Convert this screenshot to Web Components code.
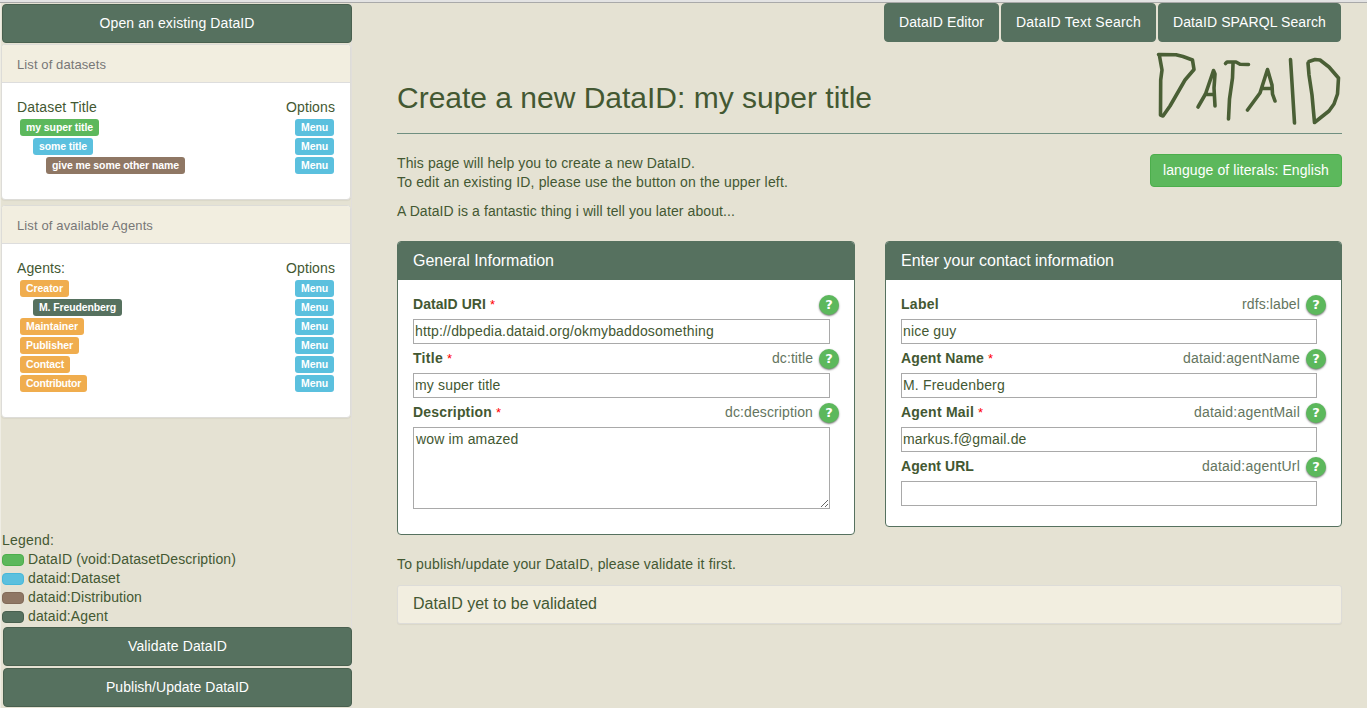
<!DOCTYPE html>
<html lang="en">
<head>
<meta charset="utf-8">
<title>DataID Editor</title>
<style>
html,body{margin:0;height:100%;overflow:hidden}
body{background:#e5e2d3;font:14px/19px "Liberation Sans",Arial,sans-serif;color:#435832}
</style>
</head>
<body>
<dataid-app></dataid-app>
<script>
const define = (name, css, html, setup) => {
  const template = document.createElement('template');
  template.innerHTML = `<style>*{box-sizing:border-box}:host{box-sizing:border-box;display:block}${css}</style>${html}`;
  customElements.define(name, class extends HTMLElement {
    constructor() {
      super();
      this.attachShadow({ mode: 'open' }).append(template.content.cloneNode(true));
    }
    connectedCallback() { if (setup) setup(this, this.shadowRoot); }
  });
};
// Fits a line of text to a given width by spreading the difference over its letters.
const fit = (el, width) => {
  if (!width) return;
  const range = document.createRange();
  range.selectNodeContents(el);
  const natural = range.getBoundingClientRect().width;
  el.style.letterSpacing = ((width - natural) / el.textContent.length) + 'px';
};

define('fit-text', ':host{display:inline-block;white-space:nowrap}', '<slot></slot>',
  el => fit(el, +el.getAttribute('w')));

define('d-button', `
  button{display:block;width:100%;height:39px;margin:0;padding:0 14px;border:1px solid #49604f;border-radius:4px;background:#56715f;color:#fff;font:inherit;text-align:center;white-space:nowrap}
  :host([kind=nav]) button{border-color:#56715f}
  :host([kind=success]) button{height:33px;padding:0 12px;background:#5cb85c;border-color:#4cae4c}`,
  '<button><slot></slot></button>');

define('d-label', `
  :host{height:17px;padding:0 6px;border-radius:3px;background:#5bc0de;color:#fff;font:bold 10.5px/17px "Liberation Sans",Arial,sans-serif;text-align:center;white-space:nowrap}
  :host([kind=root]){background:#5cb85c}
  :host([kind=distribution]){background:#8f7764}
  :host([kind=role]){background:#f0ad4e}
  :host([kind=agent]){background:#56715f}`,
  '<slot></slot>', el => { el.style.width = el.getAttribute('w') + 'px'; });

define('tree-row', `
  :host{height:19px;display:flex;justify-content:space-between;padding:1px 1px 1px 3px}
  d-label{flex:none}
  #name{display:flex}`,
  '<div id="name"><slot></slot></div><d-label w="39"><fit-text w="27">Menu</fit-text></d-label>',
  (el, root) => { root.getElementById('name').style.paddingLeft = 13 * (+el.getAttribute('level') || 0) + 'px'; });

define('side-panel', `
  :host{width:350px;margin-left:-1px;border:1px solid #dddcd8;border-radius:4px;background:#fff;box-shadow:0 1px 1px rgba(0,0,0,.05);overflow:hidden}
  header{height:38px;padding:11px 15px 0;background:#f2eee0;border-bottom:1px solid #ddd;font-size:13px;line-height:18px;color:#777}
  section{padding:15px 15px 0}
  .cols{display:flex;justify-content:space-between;height:20px}`,
  `<header><slot name="title"></slot></header>
   <section><div class="cols"><slot name="column"></slot><fit-text w="49">Options</fit-text></div><slot></slot></section>`);

define('legend-row', `
  :host{display:flex;align-items:center;height:19px;gap:4px}
  i{width:22px;height:12px;border-radius:4px;border:1px solid #4cae4c;background:#5cb85c}
  :host([kind=dataset]) i{background:#5bc0de;border-color:#46b8da}
  :host([kind=distribution]) i{background:#8f7764;border-color:#826b59}
  :host([kind=agent]) i{background:#56715f;border-color:#49604f}`,
  '<i></i><slot></slot>');

define('help-icon', `
  :host{width:20px;height:20px;border-radius:50%;background:#5cb85c;color:#fff;box-shadow:0 1px 2px rgba(0,0,0,.55);font:bold 13px/19px "DejaVu Sans","Liberation Sans",sans-serif;text-align:center}`,
  '?');

define('form-field', `
  :host{height:54px;padding-top:15px}
  :host([multiline]){height:111px}
  .head{display:flex;height:24px;margin-right:-9px}
  .name{font-weight:bold;display:flex;gap:4px}
  .req{color:#f00;font-weight:normal;font-size:13px}
  .prop{margin-left:auto;margin-right:6px;color:#647560}
  input,textarea{display:block;width:100%;height:25px;margin:0;padding:0 1px 2px;border:1px solid #a9a9a9;border-radius:0;font:inherit;color:inherit;background:#fff;outline:0}
  textarea{height:82px;padding:2px;resize:vertical}`,
  `<div class="head"><div class="name"><fit-text id="label"></fit-text><span class="req"></span></div>
   <div class="prop"><fit-text id="prop"></fit-text></div><help-icon></help-icon></div><div id="control"></div>`,
  (el, root) => {
    const attr = n => el.getAttribute(n) || '';
    const label = root.getElementById('label'), prop = root.getElementById('prop');
    label.textContent = attr('label');
    fit(label, +attr('lw'));
    prop.textContent = attr('prop');
    fit(prop, +attr('pw'));
    if (el.hasAttribute('required')) root.querySelector('.req').textContent = '*';
    const input = document.createElement(el.hasAttribute('multiline') ? 'textarea' : 'input');
    input.value = attr('value');
    input.spellcheck = false;
    input.style.letterSpacing = '0.16px';
    root.getElementById('control').append(input);
  });

define('form-panel', `
  :host{border:1px solid #56715f;border-radius:4px;background:#fff;overflow:hidden}
  header{height:38px;padding:9px 15px 0;background:#56715f;color:#fff;font-size:16px}
  section{padding:0 24px 0 15px}`,
  '<header><slot name="title"></slot></header><section><slot></slot></section>');

define('dataid-logo', ':host{width:186px;height:76px}svg{display:block}', `
  <svg width="186" height="76" viewBox="1156 51 186 76" fill="none" stroke="#4a5f35" stroke-width="3.6" stroke-linecap="round" stroke-linejoin="round">
    <path d="M1158.500 54.500L1176 54.700 1183 56.500 1192.500 60 1194 69.500 1185 80 1170 106 1163 116 1160.500 115 1160.700 80 1162 70 1159.500 56"/>
    <path d="M1198 107L1205.500 94 1213.500 70.500 1215 74 1214 88 1215 106M1205 94.500L1214 94.500"/>
    <path d="M1225.500 63.500L1227 62 1236 62 1240 64.300 1248.500 64.500M1233 64L1232.500 78 1229.500 99 1228.500 119"/>
    <path d="M1247.500 110L1260 93 1267.500 69.500 1272 85 1272.500 94 1275 101M1262 88.500L1271 88.500"/>
    <path d="M1290.500 59.500L1292 83 1294.500 123"/>
    <path d="M1308 63L1309 75 1312 95 1314.500 122.500 1329 111 1334 104 1337.500 94 1338.500 78 1329 67 1320 60 1315 59.500 1309 61.500"/>
  </svg>`);

define('data-sidebar', `
  :host{width:351px;padding-left:1px;display:flex;flex-direction:column;border-right:1px solid #e2dfdb}
  .top{width:350px;margin:1px 0 1px}
  side-panel{flex:none}
  .datasets{height:156px;margin-bottom:5px}
  .agents{height:213px}
  .legend{margin-top:auto}
  .actions{display:grid;gap:2px;width:349px;margin:1px 0 1px 1px}`, `
  <d-button class="top"><fit-text w="155">Open an existing DataID</fit-text></d-button>
  <side-panel class="datasets">
    <fit-text slot="title" w="89">List of datasets</fit-text><fit-text slot="column" w="80">Dataset Title</fit-text>
    <tree-row><d-label kind="root" w="79"><fit-text w="67">my super title</fit-text></d-label></tree-row>
    <tree-row level="1"><d-label w="60"><fit-text w="48">some title</fit-text></d-label></tree-row>
    <tree-row level="2"><d-label kind="distribution" w="139"><fit-text w="127">give me some other name</fit-text></d-label></tree-row>
  </side-panel>
  <side-panel class="agents">
    <fit-text slot="title" w="136">List of available Agents</fit-text><fit-text slot="column" w="48">Agents:</fit-text>
    <tree-row><d-label kind="role" w="49"><fit-text w="37">Creator</fit-text></d-label></tree-row>
    <tree-row level="1"><d-label kind="agent" w="89"><fit-text w="77">M. Freudenberg</fit-text></d-label></tree-row>
    <tree-row><d-label kind="role" w="64"><fit-text w="52">Maintainer</fit-text></d-label></tree-row>
    <tree-row><d-label kind="role" w="59"><fit-text w="47">Publisher</fit-text></d-label></tree-row>
    <tree-row><d-label kind="role" w="50"><fit-text w="38">Contact</fit-text></d-label></tree-row>
    <tree-row><d-label kind="role" w="67"><fit-text w="55">Contributor</fit-text></d-label></tree-row>
  </side-panel>
  <div class="legend">
    <fit-text w="52">Legend:</fit-text>
    <legend-row><fit-text w="208">DataID (void:DatasetDescription)</fit-text></legend-row>
    <legend-row kind="dataset"><fit-text w="92">dataid:Dataset</fit-text></legend-row>
    <legend-row kind="distribution"><fit-text w="114">dataid:Distribution</fit-text></legend-row>
    <legend-row kind="agent"><fit-text w="80">dataid:Agent</fit-text></legend-row>
  </div>
  <div class="actions">
    <d-button><fit-text w="99">Validate DataID</fit-text></d-button>
    <d-button><fit-text w="143">Publish/Update DataID</fit-text></d-button>
  </div>`);

define('data-main', `
  :host{flex:1;padding:0 25px 0 45px}
  nav{display:flex;justify-content:flex-end;gap:2px;margin-right:1px}
  .title{display:flex;justify-content:space-between;height:92px;border-bottom:1px solid #6f8f80}
  h1{margin:39px 0 0;font-size:30px;line-height:34px;font-weight:normal}
  dataid-logo{margin-top:9px}
  .intro{display:flex;justify-content:space-between;height:107px;padding-top:20px}
  p{margin:0 0 10px}
  fit-text{vertical-align:top}
  .forms{display:grid;grid-template-columns:458px 457px;gap:30px;align-items:start}
  .general{height:294px}.contact{height:286px}
  .hint{margin:20px 0 11px}
  .status{height:39px;margin:0;padding:8px 15px;background:#f2eee0;border:1px solid #dddcd8;border-radius:3px;box-shadow:0 1px 1px rgba(0,0,0,.05);font-size:16px}`, `
  <nav>
    <d-button kind="nav" style="width:115px"><fit-text w="85">DataID Editor</fit-text></d-button>
    <d-button kind="nav" style="width:155px"><fit-text w="125">DataID Text Search</fit-text></d-button>
    <d-button kind="nav" style="width:183px"><fit-text w="153">DataID SPARQL Search</fit-text></d-button>
  </nav>
  <div class="title"><h1><fit-text w="475">Create a new DataID: my super title</fit-text></h1><dataid-logo></dataid-logo></div>
  <div class="intro">
    <div>
      <p><fit-text w="298">This page will help you to create a new DataID.</fit-text><br><fit-text w="391">To edit an existing ID, please use the button on the upper left.</fit-text></p>
      <p><fit-text w="338">A DataID is a fantastic thing i will tell you later about...</fit-text></p>
    </div>
    <d-button kind="success" style="width:192px"><fit-text w="166">languge of literals: English</fit-text></d-button>
  </div>
  <div class="forms">
    <form-panel class="general">
      <fit-text slot="title" w="141">General Information</fit-text>
      <form-field label="DataID URI" lw="73" required value="http://dbpedia.dataid.org/okmybaddosomething"></form-field>
      <form-field label="Title" lw="30" required prop="dc:title" pw="41" value="my super title"></form-field>
      <form-field label="Description" lw="79" required prop="dc:description" pw="88" multiline value="wow im amazed"></form-field>
    </form-panel>
    <form-panel class="contact">
      <fit-text slot="title" w="213">Enter your contact information</fit-text>
      <form-field label="Label" lw="38" prop="rdfs:label" pw="58" value="nice guy"></form-field>
      <form-field label="Agent Name" lw="83" required prop="dataid:agentName" pw="117" value="M. Freudenberg"></form-field>
      <form-field label="Agent Mail" lw="73" required prop="dataid:agentMail" pw="106" value="markus.f@gmail.de"></form-field>
      <form-field label="Agent URL" lw="73" prop="dataid:agentUrl" pw="98"></form-field>
    </form-panel>
  </div>
  <p class="hint"><fit-text w="339">To publish/update your DataID, please validate it first.</fit-text></p>
  <div class="status"><fit-text w="184">DataID yet to be validated</fit-text></div>`);

define('dataid-app', `
  :host{height:100vh;display:flex;flex-direction:column}
  .edge{height:3px;background:#e3e3e3;border-bottom:1px solid #a9a9a9}
  .page{flex:1;display:flex;border-left:1px solid #efede4;min-height:0}`,
  '<div class="edge"></div><div class="page"><data-sidebar></data-sidebar><data-main></data-main></div>');
</script>
</body>
</html>
